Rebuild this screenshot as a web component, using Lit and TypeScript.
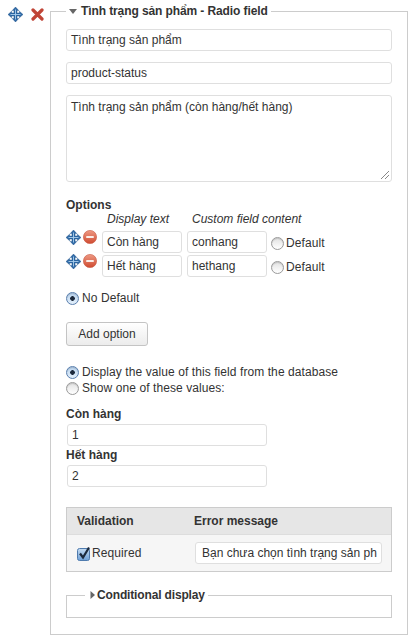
import { LitElement, html, css, svg } from 'lit';
import { customElement } from 'lit/decorators.js';

const moveIcon = html`<svg class="move" viewBox="0 0 15 15" width="15" height="15">
  ${svg`<path d="M7.5 0 10.8 3.6H9V6h2.4V4.2L15 7.5l-3.6 3.3V9H9v2.4h1.8L7.5 15l-3.3-3.6H6V9H3.6v1.8L0 7.5l3.6-3.3V6H6V3.6H4.2Z" fill="#2f6aa6" stroke="#1d4f85" stroke-width=".4"/>
  <path d="M7.5 2.5v10M2.5 7.5h10" stroke="#a9cdec" stroke-width=".9"/>`}
</svg>`;

const minusIcon = html`<svg class="minus" viewBox="0 0 14 14" width="14" height="14">
  ${svg`<defs><linearGradient id="mg" x1="0" y1="0" x2="0" y2="1"><stop offset="0" stop-color="#ee9a84"/><stop offset="1" stop-color="#cf4a30"/></linearGradient></defs>
  <circle cx="7" cy="7" r="6.6" fill="url(#mg)" stroke="#c9583f" stroke-width=".6"/>
  <rect x="3.2" y="5.9" width="7.6" height="2.2" rx=".6" fill="#fbeee9"/>`}
</svg>`;

const deleteIcon = html`<svg class="del" viewBox="0 0 13 13" width="13" height="13">
  ${svg`<path d="M2 2 11 11M11 2 2 11" stroke="#c04436" stroke-width="3.2" stroke-linecap="round"/>`}
</svg>`;

const arrow = (open: boolean) => html`<svg class="arrow" viewBox="0 0 8 8" width="8" height="8">
  ${svg`<path d=${open ? 'M0 2h8L4 7Z' : 'M1.5 0v8L6 4Z'} fill="#666"/>`}
</svg>`;

const checkbox = html`<svg class="check" viewBox="0 0 14 15" width="14" height="15">
  ${svg`<defs><linearGradient id="cg" x1="0" y1="0" x2="0" y2="1"><stop offset="0" stop-color="#c5dcf2"/><stop offset="1" stop-color="#6d9fd6"/></linearGradient></defs>
  <rect x=".5" y="2.5" width="12" height="12" rx="2" fill="url(#cg)" stroke="#4f7bae"/>
  <path d="M3 7.5 6 11.5 12 1.5" fill="none" stroke="#1c2a3d" stroke-width="2.2"/>`}
</svg>`;

@customElement('app-root')
export class AppRoot extends LitElement {
  static styles = css`
    :host {
      display: block;
      background: #fff;
      font-family: "Liberation Sans", Arial, sans-serif;
      font-size: 12px;
      color: #333;
      height: 639px;
    }
    .page {
      display: flex;
      align-items: flex-start;
    }
    .tools {
      width: 50px;
      flex: none;
      display: flex;
      align-items: center;
      gap: 8px;
      padding: 7px 0 0 8px;
      box-sizing: border-box;
    }
    svg {
      display: block;
      flex: none;
    }
    fieldset {
      margin: 0;
      min-width: 0;
      box-sizing: border-box;
      border: 1px solid #ccc;
    }
    .outer {
      width: 358px;
      margin-top: 3px;
      padding: 0 15px 16px;
    }
    legend {
      display: flex;
      align-items: center;
      height: 16px;
      padding: 0 3px;
      font-weight: bold;
      gap: 4px;
      letter-spacing: -0.1px;
    }
    .field {
      box-sizing: border-box;
      height: 22px;
      padding: 0 4px;
      display: flex;
      align-items: center;
      background: #fff;
      border: 1px solid #dfdfdf;
      border-radius: 3px;
      white-space: nowrap;
      overflow: hidden;
    }
    .outer > legend + .field {
      margin-top: 10px;
    }
    .mt11 {
      margin-top: 11px;
    }
    .area {
      height: 87px;
      align-items: flex-start;
      padding-top: 4px;
      position: relative;
    }
    .grip {
      position: absolute;
      right: 1px;
      bottom: 1px;
    }
    .title {
      margin-top: 16px;
      font-weight: bold;
      line-height: 14px;
    }
    .heads {
      display: flex;
      font-style: italic;
      line-height: 14px;
      margin-bottom: 5px;
      padding-left: 41px;
    }
    .heads span:first-child {
      width: 85px;
    }
    .opt {
      display: flex;
      margin-bottom: 2px;
      align-items: flex-start;
    }
    .opt .grips {
      width: 36px;
      flex: none;
      display: flex;
      align-items: center;
      gap: 2px;
      margin-top: -2px;
      height: 16px;
    }
    .opt .field {
      width: 80px;
      margin-right: 5px;
    }
    .opt .def {
      margin: 4px 0 0 -1px;
      gap: 2px;
    }
    .radio {
      display: flex;
      align-items: center;
      height: 16px;
      gap: 3px;
      letter-spacing: 0.08px;
    }
    .dot {
      box-sizing: border-box;
      width: 13px;
      height: 13px;
      flex: none;
      border-radius: 50%;
      border: 1px solid #9a9a9a;
      background: linear-gradient(#e2e2e2, #fff);
      box-shadow: inset 0 1px 1px rgba(0, 0, 0, 0.15);
    }
    .dot.on {
      border-color: #5a7fae;
      background: radial-gradient(circle, #1d2a3c 0 2px, transparent 2.6px), linear-gradient(#b9d3ee, #e4f0fb);
    }
    .nodef {
      margin-top: 13px;
    }
    .btn {
      margin-top: 16px;
      box-sizing: border-box;
      width: 82px;
      height: 24px;
      display: flex;
      align-items: center;
      justify-content: center;
      border: 1px solid #c4c4c4;
      border-radius: 3px;
      background: linear-gradient(#fff, #ececec);
    }
    .choice {
      margin-top: 18px;
    }
    .label {
      font-weight: bold;
      line-height: 14px;
    }
    .wide {
      width: 200px;
      margin: 3px 0 2px 1px;
    }
    .first {
      margin-top: 11px;
    }
    .table {
      margin-top: 20px;
      border: 1px solid #ccc;
      display: grid;
      grid-template-columns: 117px 1fr;
    }
    .th {
      height: 26px;
      display: flex;
      align-items: center;
      padding-left: 10px;
      background: #e6e6e6;
      font-weight: bold;
      border-bottom: 1px solid #ddd;
    }
    .td {
      height: 36px;
      display: flex;
      align-items: center;
      background: #f6f6f6;
    }
    .req {
      padding-left: 10px;
      gap: 1px;
      letter-spacing: 0.1px;
    }
    .msg {
      width: 187px;
      padding: 0 6px;
      margin-left: 11px;
    }
    .inner {
      margin-top: 15px;
      height: 31px;
      padding: 0;
    }
    .inner legend {
      margin-left: 18px;
      gap: 0;
      padding: 0 3px 0 4px;
      letter-spacing: -0.15px;
    }
  `;

  render() {
    return html`<div class="page">
      <div class="tools">${moveIcon}${deleteIcon}</div>
      <fieldset class="outer">
        <legend>${arrow(true)}<span>Tình trạng sản phẩm - Radio field</span></legend>
        <div class="field">Tình trạng sản phẩm</div>
        <div class="field mt11">product-status</div>
        <div class="field area mt11">
          Tình trạng sản phẩm (còn hàng/hết hàng)
          <svg class="grip" viewBox="0 0 10 10" width="10" height="10">
            ${svg`<path d="M1 9 9 1M5 9 9 5" stroke="#888" stroke-width="1"/>`}
          </svg>
        </div>
        <div class="title">Options</div>
        <div class="heads"><span>Display text</span><span>Custom field content</span></div>
        ${[
          ['Còn hàng', 'conhang'],
          ['Hết hàng', 'hethang'],
        ].map(
          ([name, val]) => html`<div class="opt">
            <div class="grips">${moveIcon}${minusIcon}</div>
            <div class="field">${name}</div>
            <div class="field">${val}</div>
            <div class="radio def"><span class="dot"></span>Default</div>
          </div>`
        )}
        <div class="radio nodef"><span class="dot on"></span>No Default</div>
        <div class="btn">Add option</div>
        <div class="choice">
          <div class="radio"><span class="dot on"></span>Display the value of this field from the database</div>
          <div class="radio"><span class="dot"></span>Show one of these values:</div>
        </div>
        <div class="label first">Còn hàng</div>
        <div class="field wide">1</div>
        <div class="label">Hết hàng</div>
        <div class="field wide">2</div>
        <div class="table">
          <div class="th">Validation</div>
          <div class="th">Error message</div>
          <div class="td req">${checkbox}Required</div>
          <div class="td"><div class="field msg">Bạn chưa chọn tình trạng sản ph</div></div>
        </div>
        <fieldset class="inner">
          <legend>${arrow(false)}<span>Conditional display</span></legend>
        </fieldset>
      </fieldset>
    </div>`;
  }
}
